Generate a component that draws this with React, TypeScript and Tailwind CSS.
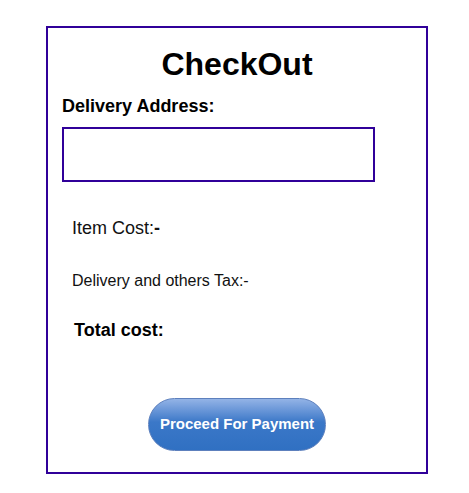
import React from "react";

const App: React.FC = () => {
  return (
    <div className="min-h-screen bg-white pt-[26px] font-['Liberation_Sans',Arial,sans-serif] text-black">
      <div className="ml-[46px] flex h-[448px] w-[382px] flex-col border-2 border-[#300099]">
        {/* Title */}
        <h1 className="mt-[18px] text-center text-[32px] font-bold leading-[37px]">
          CheckOut
        </h1>

        {/* Address */}
        <label className="ml-[14px] mt-[13px] text-[18px] font-bold leading-[21px]">
          Delivery Address:
        </label>
        <input
          type="text"
          className="ml-[14px] mt-[10px] h-[55px] w-[313px] border-2 border-[#300099] bg-white px-2 outline-none"
        />

        {/* Costs */}
        <p className="ml-[24px] mt-[36px] text-[18px] leading-[21px] text-[#111]">
          Item Cost:<span className="font-bold">-</span>
        </p>
        <p className="ml-[24px] mt-[33px] text-[16px] leading-[18px] text-[#111]">
          Delivery and others Tax:-
        </p>
        <p className="ml-[26px] mt-[30px] text-[18px] font-bold leading-[21px]">
          Total cost:
        </p>

        {/* Payment button */}
        <div className="mt-[57px] flex justify-center">
          <button className="h-[53px] w-[178px] rounded-full border border-[#5d80bd] bg-gradient-to-b from-[#93b3e6] via-[#3b78c8] via-45% to-[#3070c2] text-[15px] font-bold text-white">
            Proceed For Payment
          </button>
        </div>
      </div>
    </div>
  );
};

export default App;
